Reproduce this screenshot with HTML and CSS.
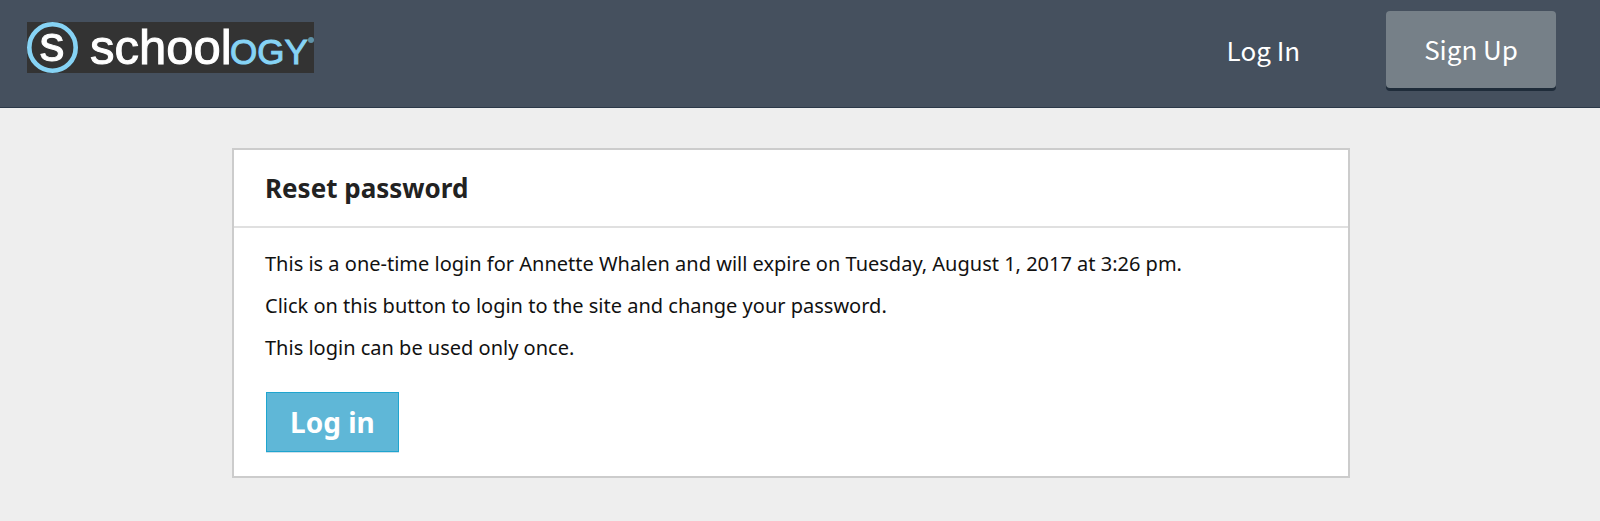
FILE: index.html
```html
<!DOCTYPE html>
<html lang="en">
<head>
<meta charset="utf-8">
<meta name="viewport" content="width=device-width, initial-scale=1">
<title>Reset password | Schoology</title>
<link rel="stylesheet" href="styles.css">
</head>
<body>
<header class="site-header">
  <a class="logo" href="#" aria-label="Schoology">
    <svg class="logo-art" viewBox="0 0 287 51" width="287" height="51">
      <rect width="287" height="51" fill="#333333"/>
      <circle cx="25.5" cy="25.5" r="23.2" fill="none" stroke="#86d3f5" stroke-width="4.6"/>
      <text class="logo-mark" x="25" y="39" text-anchor="middle">s</text>
      <text class="logo-white" x="63" y="42">school</text>
      <text class="logo-blue" x="203" y="42">OGY</text>
      <circle cx="284" cy="18" r="3" fill="#5f93a8"/>
    </svg>
  </a>
  <nav class="site-nav">
    <a class="nav-link" href="#">Log In</a>
    <a class="nav-button" href="#">Sign Up</a>
  </nav>
</header>
<main class="page">
  <section class="card">
    <h1 class="card-title">Reset password</h1>
    <form class="card-body">
      <p class="note">This is a one-time login for Annette Whalen and will expire on Tuesday, August 1, 2017 at 3:26 pm.</p>
      <p class="note">Click on this button to login to the site and change your password.</p>
      <p class="note">This login can be used only once.</p>
      <button class="submit" type="button">Log in</button>
    </form>
  </section>
</main>
</body>
</html>
```
FILE: styles.css
```css
* {
  box-sizing: border-box;
}

body {
  margin: 0;
  background: #eeeeee;
  color: #111111;
  font-family: "Noto Sans", sans-serif;
}

.site-header {
  display: flex;
  justify-content: space-between;
  align-items: flex-start;
  padding: 11px 44px 19px 27px;
  background: #45505e;
  border-bottom: 1px solid #2b3848;
}

.logo {
  padding-top: 11px;
}

.logo-art {
  display: block;
  overflow: visible;
}

.logo-mark,
.logo-white,
.logo-blue {
  font-family: "Liberation Sans", sans-serif;
}

.logo-mark {
  font-size: 50px;
  fill: #ffffff;
  stroke: #ffffff;
}

.logo-white {
  font-size: 49px;
  fill: #ffffff;
  stroke: #ffffff;
}

.logo-blue {
  font-size: 35px;
  fill: #86d3f5;
  stroke: #86d3f5;
}

.site-nav {
  display: flex;
  align-items: flex-start;
  gap: 86px;
  font-family: "Noto Sans CJK SC", sans-serif;
  font-size: 26px;
  line-height: 40px;
}

.nav-link,
.nav-button {
  color: #ffffff;
  text-decoration: none;
}

.nav-link {
  padding-top: 19px;
}

.nav-button {
  padding: 18px 38px 19px;
  border-radius: 4px;
  background: #768088;
  box-shadow: 0 3px 0 #1f2c3a;
}

.page {
  padding: 40px 250px 40px 232px;
}

.card {
  background: #ffffff;
  border: 2px solid #cccccc;
}

.card-title {
  margin: 0;
  padding: 19px 31px;
  border-bottom: 2px solid #e0e0e0;
  color: #222222;
  font-size: 26px;
  line-height: 38px;
}

.card-body {
  padding: 15px 31px 24px;
}

.note {
  margin: 0;
  font-size: 20px;
  line-height: 42px;
}

.submit {
  display: block;
  margin: 23px 1px 0;
  padding: 10px 23px;
  border: 1px solid #1fa5cf;
  background: #5fb7d7;
  box-shadow: 0 1px 0 #cfe0ea;
  color: #ffffff;
  font-family: inherit;
  font-size: 28px;
  font-weight: 700;
  line-height: 38px;
}
```
